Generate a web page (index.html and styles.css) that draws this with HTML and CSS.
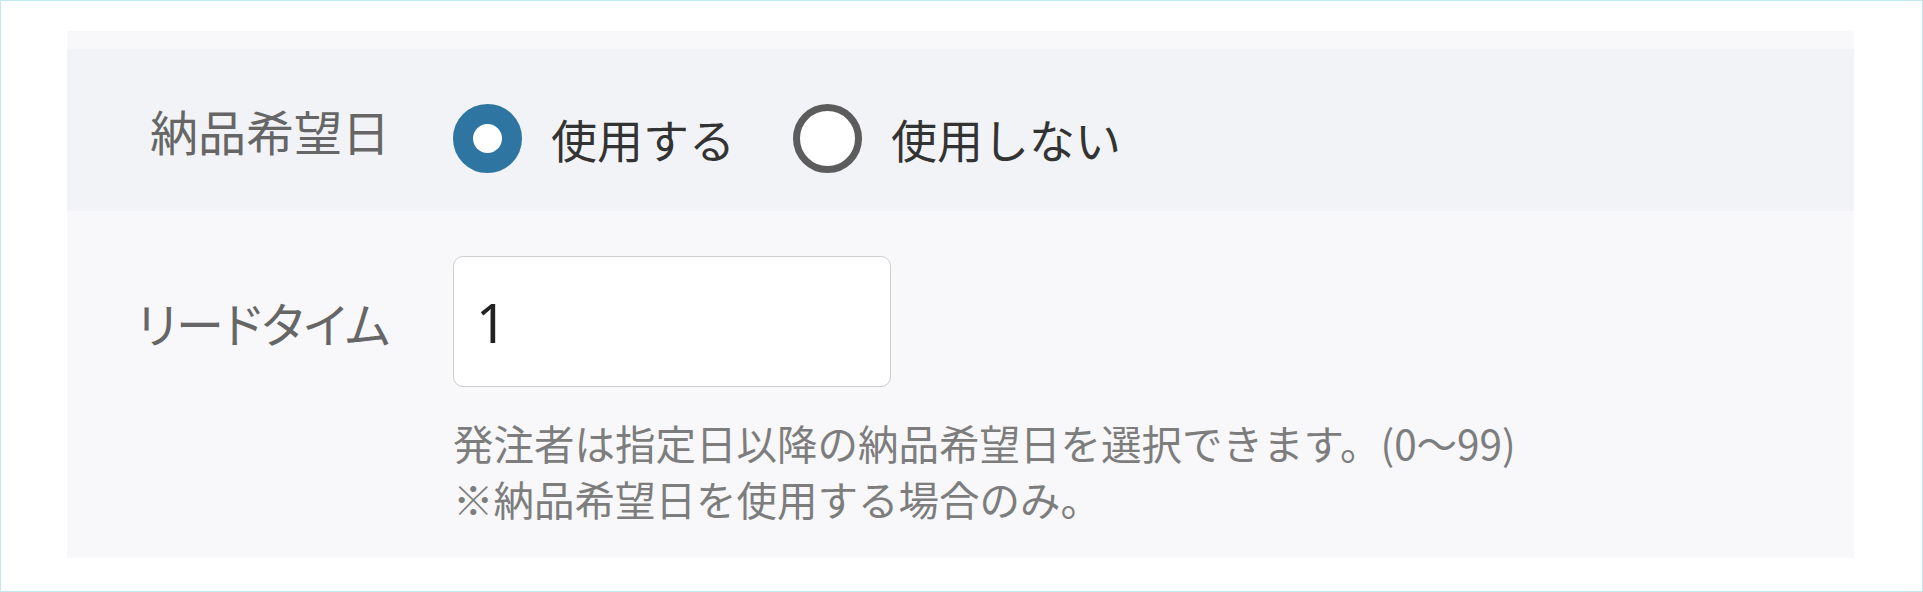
FILE: index.html
```html
<!DOCTYPE html>
<html lang="ja">
<head>
    <meta charset="UTF-8">
    <title>納品希望日設定</title>
    <link rel="stylesheet" href="styles.css">
</head>
<body>
    <div class="frame">
        <div class="panel">
            <div class="panel-top"></div>
            <div class="row row-use">
                <div class="label">納品希望日</div>
                <div class="options">
                    <label class="option">
                        <input type="radio" name="use" class="radio" checked>
                        <span>使用する</span>
                    </label>
                    <label class="option">
                        <input type="radio" name="use" class="radio">
                        <span>使用しない</span>
                    </label>
                </div>
            </div>
            <div class="row row-lead">
                <div class="label label-lead">リードタイム</div>
                <div class="field">
                    <input type="text" class="text-input" value="1">
                    <p class="help">発注者は指定日以降の納品希望日を選択できます。(0～99)<br>※納品希望日を使用する場合のみ。</p>
                </div>
            </div>
        </div>
    </div>
</body>
</html>
```

FILE: styles.css
```css
body {
    margin: 0;
    background: #fff;
    font-family: "Noto Sans CJK JP", sans-serif;
}
.frame {
    box-sizing: border-box;
    height: 592px;
    border: 1px solid #bfe7f8;
    padding: 30px 0 0 66px;
}
.panel {
    width: 1787px;
    background: #f8f8fa;
}
.panel-top {
    height: 18px;
}
.row {
    display: flex;
}
.row-use {
    height: 162px;
    align-items: center;
    background: #f2f3f6;
}
.row-lead {
    height: 347px;
    box-sizing: border-box;
    padding-top: 45px;
    align-items: flex-start;
    background: #f8f8fb;
}
.label {
    width: 323px;
    flex-shrink: 0;
    text-align: right;
    font-size: 48px;
    line-height: 1;
    color: #666;
}
.label-lead {
    height: 131px;
    display: flex;
    align-items: center;
    justify-content: flex-end;
    font-feature-settings: "palt";
}
.options {
    display: flex;
    align-items: center;
    margin-left: 63px;
    padding-top: 16px;
}
.option {
    display: flex;
    align-items: center;
    margin-right: 58px;
    font-size: 46px;
    line-height: 1;
    color: #333;
}
.option span {
    margin-left: 29px;
}
.radio {
    appearance: none;
    -webkit-appearance: none;
    box-sizing: border-box;
    width: 69px;
    height: 69px;
    margin: 0;
    border-radius: 50%;
    border: 7px solid #5c5c5c;
    background: #fff;
}
.radio:checked {
    border: 20px solid #2e75a1;
}
.field {
    margin-left: 63px;
}
.text-input {
    box-sizing: border-box;
    width: 438px;
    height: 131px;
    margin: 0;
    padding: 0 0 0 22px;
    border: 1px solid #cfcfcf;
    border-radius: 10px;
    background: #fff;
    font-family: "Noto Sans", sans-serif;
    font-size: 54px;
    color: #222;
}
.help {
    margin: 28px 0 0;
    font-size: 40.5px;
    line-height: 56px;
    color: #7d7d7d;
}
```
